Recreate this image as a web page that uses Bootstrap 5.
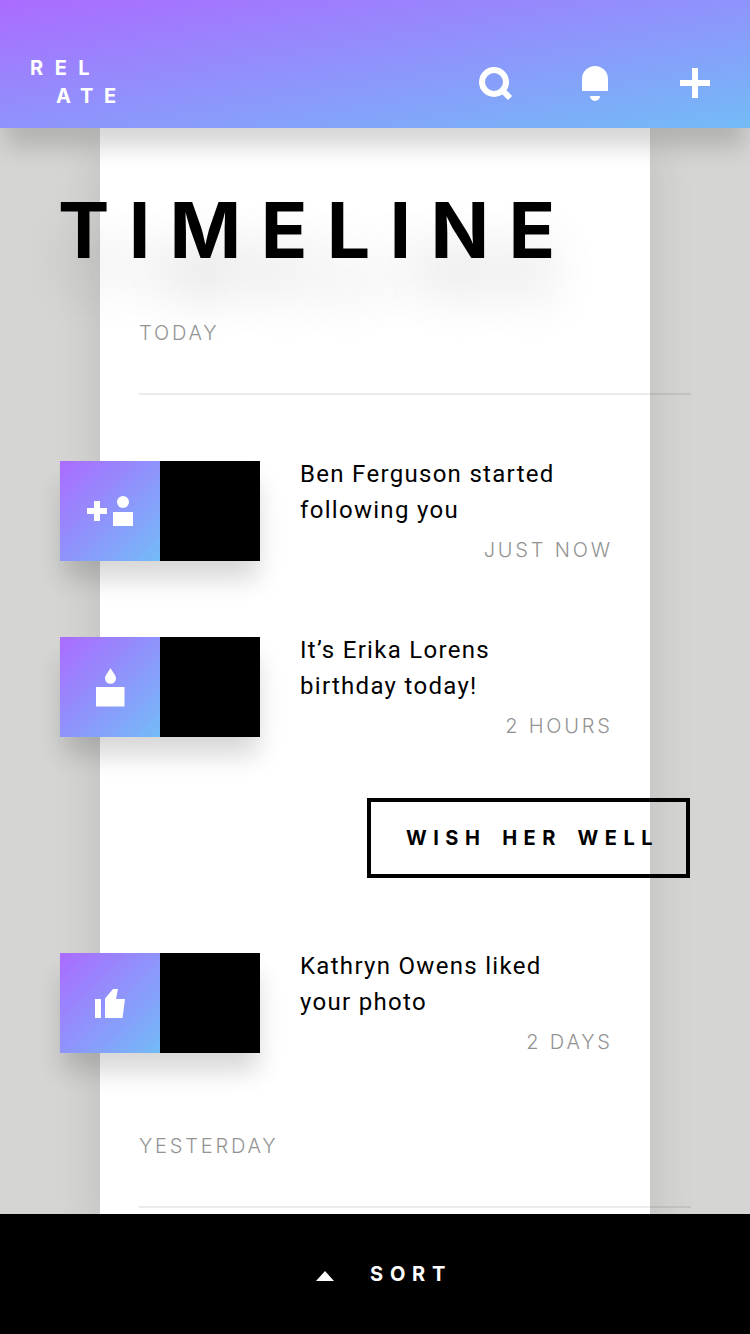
<!DOCTYPE html>
<html lang="en">
<head>
<meta charset="utf-8">
<meta name="viewport" content="width=device-width, initial-scale=1">
<title>Relate – Timeline</title>
<link rel="stylesheet" href="https://cdn.jsdelivr.net/npm/bootstrap@5.3.0/dist/css/bootstrap.min.css">
<style>
  body { background: #d5d5d3; color: #000; font-family: Inter, "Open Sans", sans-serif; height: 1334px; }
  svg { display: block; fill: #fff; }
  .topbar { height: 128px; padding: 0 40px 0 30px; background: linear-gradient(to bottom right, #ab6bff, #8f93fc 50%, #73bbf7); box-shadow: 0 24px 22px -5px rgba(0,0,0,.16); z-index: 2; }
  .brand { font-weight: 700; font-size: 20px; line-height: 28px; color: #fff; padding-top: 54px; }
  .brand .l1 { letter-spacing: 11.5px; }
  .brand .l2 { letter-spacing: 10.8px; padding-left: 26px; }
  .tools { padding-top: 65px; }
  .icon-search { margin-right: 68px; }
  .icon-bell { margin-right: 72px; }
  .stage { height: 1086px; }
  .sheet { margin: 0 100px; height: 1086px; background: #fff; box-shadow: 0 20px 44px rgba(0,0,0,.12); padding-top: 54px; }
  .title { margin: 0 -60px 43px -42px; font-size: 77px; line-height: 96px; font-weight: 700; letter-spacing: 19.3px; text-shadow: 0 40px 50px rgba(0,0,0,.17); }
  .caption { font-weight: 300; font-size: 20px; line-height: 24px; letter-spacing: 2.8px; color: #939393; }
  .day { margin: 0 -41px 66px 39px; height: 74px; border-bottom: 2px solid rgba(0,0,0,.08); }
  .entry { margin: 0 40px 76px -40px; gap: 40px; height: 100px; }
  .entry-last { margin-bottom: 81px; }
  .thumbs { box-shadow: 0 20px 24px -2px rgba(0,0,0,.16); }
  .tile { width: 100px; height: 100px; background: #000; }
  .tile-icon { background: linear-gradient(135deg, #ab6bff, #8f93fc 50%, #73bbf7); }
  .note { margin-top: -5px; font: 400 24px/36px Roboto, sans-serif; letter-spacing: 1.3px; white-space: nowrap; }
  .time { font-family: Inter, sans-serif; text-align: right; margin-top: 10px; margin-right: -2.8px; }
  .action { margin: -15px 0 75px; }
  .wish { width: 323px; height: 80px; margin-right: -40px; border: 4px solid #000; border-radius: 0; font-weight: 700; font-size: 20px; letter-spacing: 6.5px; word-spacing: 4.5px; white-space: nowrap; padding: 0 0 0 35px; text-align: left; color: #000; }
  .sort { height: 120px; background: #000; color: #fff; font-weight: 700; font-size: 20px; letter-spacing: 6.8px; z-index: 2; padding-left: 316px; gap: 36px; }
  .sort svg { margin-top: 3px; }
</style>
</head>
<body class="d-flex flex-column overflow-hidden">
<header class="topbar d-flex justify-content-between position-relative">
  <div class="brand"><div class="l1">REL</div><div class="l2">ATE</div></div>
  <nav class="tools d-flex">
    <svg class="icon-search" width="36" height="38" viewBox="0 0 36 38"><circle cx="16" cy="17" r="12" fill="none" stroke="#fff" stroke-width="6"/><path d="M24 25l8 8" stroke="#fff" stroke-width="6"/></svg>
    <svg class="icon-bell" width="26" height="38" viewBox="0 0 26 38"><path d="M0 26V14a13 13 0 0 1 26 0v12zM8 31h10a5 5 0 0 1-10 0z"/></svg>
    <svg width="30" height="38" viewBox="0 0 30 38"><path d="M12 3h6v12h12v6H18v12h-6V21H0v-6h12z"/></svg>
  </nav>
</header>
<main class="stage">
  <div class="sheet d-flex flex-column">
    <h1 class="title">TIMELINE</h1>
    <div class="day caption flex-shrink-0">TODAY</div>
    <article class="entry d-flex flex-shrink-0">
      <div class="thumbs d-flex"><div class="tile tile-icon">
        <svg width="100" height="100"><path d="M34 40h6v7h7v6h-7v7h-6v-7h-7v-6h7zM53 51h20v14H53z"/><circle cx="63" cy="41" r="6"/></svg>
      </div><div class="tile"></div></div>
      <div class="note flex-fill">Ben Ferguson started<br>following you<div class="time caption">JUST NOW</div></div>
    </article>
    <article class="entry d-flex flex-shrink-0">
      <div class="thumbs d-flex"><div class="tile tile-icon">
        <svg width="100" height="100"><path d="M36 50h28.500v19.500H36zM50.500 31c2 4 5.500 7 5.500 10.500a5.500 5.200 0 0 1-11 0C45 38 48.500 35 50.500 31z"/></svg>
      </div><div class="tile"></div></div>
      <div class="note flex-fill">It’s Erika Lorens<br>birthday today!<div class="time caption">2 HOURS</div></div>
    </article>
    <div class="action d-flex justify-content-end flex-shrink-0"><button class="btn wish">WISH HER WELL</button></div>
    <article class="entry entry-last d-flex flex-shrink-0">
      <div class="thumbs d-flex"><div class="tile tile-icon">
        <svg width="100" height="100"><path d="M35 46h6v19h-6zM45 45.500L53 36h5l-2 10h9l-2.500 19H45z"/></svg>
      </div><div class="tile"></div></div>
      <div class="note flex-fill">Kathryn Owens liked<br>your photo<div class="time caption">2 DAYS</div></div>
    </article>
    <div class="day caption flex-shrink-0">YESTERDAY</div>
  </div>
</main>
<footer class="sort d-flex align-items-center position-relative">
  <svg width="18" height="10" viewBox="0 0 18 10"><path d="M9 0l9 10H0z"/></svg><span>SORT</span>
</footer>
<script src="https://cdn.jsdelivr.net/npm/bootstrap@5.3.0/dist/js/bootstrap.bundle.min.js"></script>
</body>
</html>
